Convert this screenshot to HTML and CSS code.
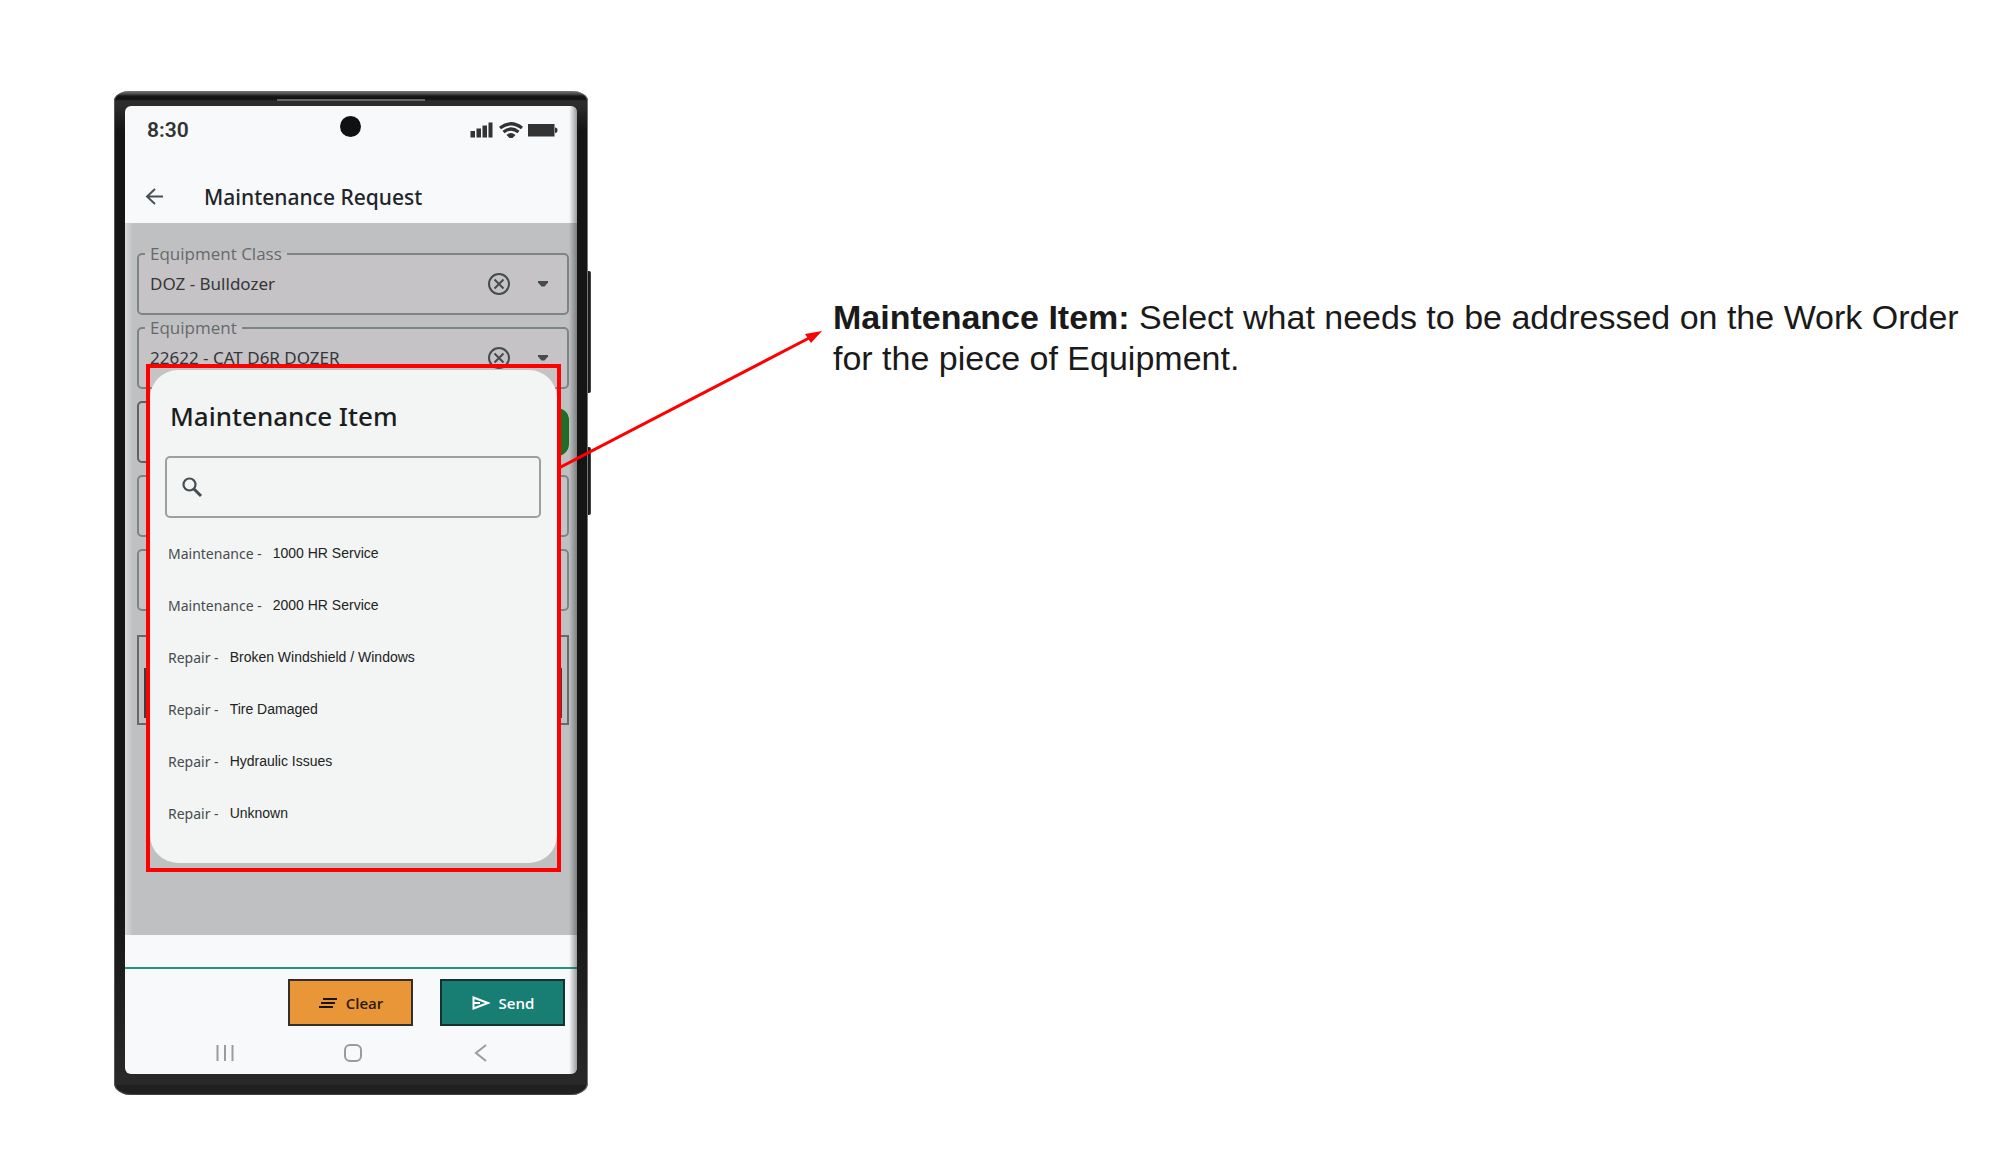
FILE: index.html
```html
<!DOCTYPE html>
<html lang="en">
<head>
    <meta charset="UTF-8">
    <meta name="viewport" content="width=device-width, initial-scale=1.0">
    <title>Maintenance Request</title>
    <link rel="stylesheet" href="styles.css">
</head>
<body>
    <div class="guide">
        <div class="phone">
            <span class="speaker"></span>
            <span class="side-button volume"></span>
            <span class="side-button power"></span>

            <div class="screen">
                <header class="top">
                    <div class="status-bar">
                        <span class="time">8:30</span>
                        <span class="camera"></span>
                        <svg class="status-icons" width="88" height="18" viewBox="0 0 88 18" fill="#333">
                            <path d="M0.500 10h4.500v6.500h-4.500zM6.500 7.500h4.500v9h-4.500zM12.500 4.500h4.500v12h-4.500zM18.500 1.500h4v15h-4z"/>
                            <g fill="none" stroke="#333" stroke-width="3.200">
                                <path d="M30 7Q41 -1.500 52 7"/>
                                <path d="M33.500 11Q41 5 48.500 11"/>
                            </g>
                            <path d="M36.500 14Q41 10 45.500 14L42.500 17h-3z"/>
                            <path d="M58 3h26.500v12.500h-26.500zM85 6.500q2.500 0 2.500 2.700t-2.500 2.700z"/>
                        </svg>
                    </div>
                    <div class="app-bar">
                        <button class="icon-button" aria-label="Back">
                            <svg width="20" height="18" viewBox="0 0 20 18" fill="none" stroke="#4a4f52" stroke-width="2"><path d="M18 8.500H2M10 1L2 8.500L10 16"/></svg>
                        </button>
                        <h1>Maintenance Request</h1>
                    </div>
                </header>

                <main class="form">
                    <fieldset class="field">
                        <legend><label for="equipmentClass">Equipment Class</label></legend>
                        <div class="field-row">
                            <select id="equipmentClass"><option>DOZ - Bulldozer</option></select>
                            <button class="icon-button" aria-label="Clear equipment class">
                                <svg width="24" height="24" viewBox="0 0 24 24" fill="none" stroke="#454c4d" stroke-width="2"><circle cx="12" cy="12" r="10"/><path d="M7.500 7.500l9 9M16.500 7.500l-9 9"/></svg>
                            </button>
                            <svg class="caret" width="10" height="6" viewBox="0 0 10 6" fill="#454c4d"><path d="M0 0h10v1.500L6.500 5.500h-3L0 1.500z"/></svg>
                        </div>
                    </fieldset>
                    <fieldset class="field">
                        <legend><label for="equipment">Equipment</label></legend>
                        <div class="field-row">
                            <select id="equipment"><option>22622 - CAT D6R DOZER</option></select>
                            <button class="icon-button" aria-label="Clear equipment">
                                <svg width="24" height="24" viewBox="0 0 24 24" fill="none" stroke="#454c4d" stroke-width="2"><circle cx="12" cy="12" r="10"/><path d="M7.500 7.500l9 9M16.500 7.500l-9 9"/></svg>
                            </button>
                            <svg class="caret" width="10" height="6" viewBox="0 0 10 6" fill="#454c4d"><path d="M0 0h10v1.500L6.500 5.500h-3L0 1.500z"/></svg>
                        </div>
                    </fieldset>
                    <div class="item-row">
                        <div class="blank active"></div>
                        <div class="add"></div>
                    </div>
                    <div class="blank"></div>
                    <div class="blank"></div>
                    <div class="notes"><div class="notes-inner"></div></div>

                    <div class="callout">
                        <section class="dialog" role="dialog" aria-labelledby="dialogTitle">
                            <h2 id="dialogTitle">Maintenance Item</h2>
                            <div class="search">
                                <svg width="22" height="22" viewBox="0 0 22 22" fill="none" stroke="#454d50"><circle cx="8.500" cy="8.500" r="6" stroke-width="2.200"/><path d="M13 13L20 20" stroke-width="3"/></svg>
                                <input type="search" aria-label="Search maintenance items">
                            </div>
                            <ul class="items">
                                <li><button>Maintenance - <span>1000 HR Service</span></button></li>
                                <li><button>Maintenance - <span>2000 HR Service</span></button></li>
                                <li><button>Repair - <span>Broken Windshield / Windows</span></button></li>
                                <li><button>Repair - <span>Tire Damaged</span></button></li>
                                <li><button>Repair - <span>Hydraulic Issues</span></button></li>
                                <li><button>Repair - <span>Unknown</span></button></li>
                            </ul>
                        </section>
                        <svg class="pointer" width="264" height="144" viewBox="0 0 264 144">
                            <path d="M0 138L254 6" stroke="#f00" stroke-width="3" fill="none"/>
                            <path d="M263 1L246 4L252 13z" fill="#f00"/>
                        </svg>
                    </div>
                </main>

                <footer class="bottom">
                    <div class="actions">
                        <button class="action clear">
                            <svg width="20" height="12" viewBox="0 0 20 12" stroke="#1d1408" stroke-width="2"><path d="M5 2h14M3 6h14M1 10h14"/></svg>
                            Clear
                        </button>
                        <button class="action send">
                            <svg width="20" height="16" viewBox="0 0 20 16" fill="none" stroke="#fff" stroke-width="2"><path d="M2.500 2.500L17 8L2.500 13.500zM2.500 8H9"/></svg>
                            Send
                        </button>
                    </div>
                    <nav class="nav-bar">
                        <button class="icon-button" aria-label="Recent apps">
                            <svg width="18" height="18" viewBox="0 0 18 18" stroke="#9b9b9b" stroke-width="2"><path d="M1.500 1v16M9 1v16M16.500 1v16"/></svg>
                        </button>
                        <button class="icon-button" aria-label="Home">
                            <svg width="18" height="18" viewBox="0 0 18 18" fill="none" stroke="#9b9b9b" stroke-width="2"><rect x="1" y="1" width="16" height="16" rx="5"/></svg>
                        </button>
                        <button class="icon-button" aria-label="Back">
                            <svg width="18" height="18" viewBox="0 0 18 18" fill="none" stroke="#9b9b9b" stroke-width="2"><path d="M14 1L4 9L14 17"/></svg>
                        </button>
                    </nav>
                </footer>
            </div>
        </div>

        <p class="note"><strong>Maintenance Item:</strong> Select what needs to be addressed on the Work Order for the piece of Equipment.</p>
    </div>
</body>
</html>
```

FILE: styles.css
```css
/* General Styles */
* {
    box-sizing: border-box;
}

body {
    margin: 0;
    background-color: #fff;
    color: #1a1a1a;
    font-family: "Noto Sans", "Open Sans", sans-serif;
}

button,
select,
input {
    font: inherit;
    color: inherit;
    margin: 0;
    padding: 0;
    border: none;
    background: none;
}

button {
    cursor: pointer;
}

svg {
    display: block;
    flex: none;
}

.guide {
    display: flex;
    align-items: flex-start;
    gap: 245px;
    padding: 91px 32px 56px 114px;
}

/* Phone frame */
.phone {
    position: relative;
    flex: 0 0 474px;
    padding: 15px 11px 21px;
    border-radius: 16px 16px 18px 18px / 10px 10px 12px 12px;
    background: linear-gradient(#777 0, #4a4a4a 3px, #181818 5px, #111 8px, #2c2c2c 10px, #2c2c2c 14px, #151515 40px, #151515 80%, #292929 99%, #202020 99%);
    box-shadow: inset 1px 0 #555, inset -1px 0 #777, inset 0 -1px #444;
}

.speaker {
    position: absolute;
    top: 8px;
    left: 163px;
    right: 163px;
    height: 2px;
    background: #666;
}

.side-button {
    position: absolute;
    left: 100%;
    width: 3px;
    background: #1c1c1c;
    border-right: 1px solid #444;
    border-radius: 0 2px 2px 0;
}

.volume {
    top: 180px;
    height: 122px;
}

.power {
    top: 356px;
    height: 68px;
}

.screen {
    position: relative;
    border-radius: 6px;
    background: #f8f9fb;
}

/* Curved glass edge */
.screen::after {
    content: "";
    position: absolute;
    top: 0;
    right: 0;
    bottom: 0;
    width: 8px;
    border-radius: 0 6px 6px 0;
    background: linear-gradient(to right, rgba(60, 65, 65, 0), rgba(60, 65, 65, 0.5));
    pointer-events: none;
}

/* Header */
.status-bar {
    position: relative;
    display: flex;
    justify-content: space-between;
    align-items: center;
    height: 48px;
    padding: 0 19px 0 22px;
}

.time {
    font-family: Roboto, sans-serif;
    font-size: 21px;
    font-weight: 600;
    color: #333;
}

.camera {
    position: absolute;
    top: 10px;
    left: 50%;
    width: 21px;
    height: 21px;
    margin-left: -11px;
    border-radius: 50%;
    background: #111;
}

.app-bar {
    display: flex;
    align-items: center;
    gap: 39px;
    padding: 28px 20px 11px;
}

.app-bar h1 {
    margin: 0;
    font-size: 21px;
    font-weight: 500;
    line-height: 30px;
    color: #222529;
}

/* Form */
.form {
    position: relative;
    padding: 20px 8px 210px 12px;
    background: linear-gradient(to right, #d8dad9, #bfc0c2 8px);
}

.field {
    min-width: 0;
    margin: 0 0 2px;
    padding: 0 19px 17px 11px;
    border: 2px solid #7d8485;
    border-radius: 5px;
    background: #c6c3c6;
}

.field legend {
    margin-left: -5px;
    padding: 0 5px;
    font-family: "Open Sans", sans-serif;
    font-size: 17px;
    line-height: 22px;
    color: #646a6b;
}

.field-row {
    display: flex;
    align-items: center;
    height: 24px;
    gap: 27px;
    margin-top: 7px;
}

.field select {
    flex: 1;
    min-width: 0;
    appearance: none;
    font-size: 17px;
    line-height: 24px;
    color: #343638;
}

.item-row {
    display: flex;
    align-items: center;
    margin: 12px 0;
}

.blank {
    height: 62px;
    margin-bottom: 12px;
    border: 2px solid #7d8485;
    border-radius: 5px;
    background: #c6c3c6;
}

.active {
    flex: 1;
    margin: 0 6px 0 0;
    border: 2px solid #5d6162;
}

.add {
    width: 60px;
    height: 48px;
    border-radius: 12px;
    background: #236b27;
}

.notes {
    margin-top: 24px;
    padding: 31px 5px 5px;
    border: 2px solid #65696a;
}

.notes-inner {
    height: 50px;
    border: 2px solid #3c3f40;
}

/* Highlighted dialog */
.callout {
    position: absolute;
    z-index: 2;
    top: 141px;
    left: 21px;
    right: 16px;
    padding: 2px 0 5px;
    border: 4px solid #f00;
}

.dialog {
    padding: 28px 16px 24px 15px;
    border-radius: 28px;
    background: #f2f5f4;
}

.dialog h2 {
    margin: 0 0 22px 5px;
    font-size: 26px;
    font-weight: 500;
    line-height: 36px;
    color: #1b1e20;
}

.search {
    display: flex;
    align-items: center;
    gap: 12px;
    height: 62px;
    padding: 0 16px 0 14px;
    border: 2px solid #9a9fa2;
    border-radius: 5px;
}

.search input {
    flex: 1;
    min-width: 0;
    height: 40px;
    font-size: 17px;
    outline: none;
}

.items {
    list-style: none;
    margin: 9px 0 0;
    padding: 0 3px;
}

.items button {
    display: flex;
    align-items: center;
    gap: 11px;
    width: 100%;
    height: 52px;
    font-size: 14px;
    color: #484b4d;
    text-align: left;
}

.items span {
    font-family: "Liberation Sans", Arial, sans-serif;
    color: #222;
}

.pointer {
    position: absolute;
    top: -38px;
    left: 100%;
    margin-left: 2px;
}

/* Footer */
.bottom {
    padding-top: 32px;
}

.actions {
    display: flex;
    justify-content: flex-end;
    gap: 27px;
    padding: 10px 12px 0;
    border-top: 2px solid #25917f;
}

.action {
    display: flex;
    justify-content: center;
    align-items: center;
    gap: 8px;
    width: 125px;
    height: 47px;
    border: 2px solid #33302c;
    font-family: "Open Sans", sans-serif;
    font-size: 15px;
    font-weight: 600;
}

.clear {
    background: #e89638;
    color: #2b1c0a;
}

.send {
    background: #187e73;
    border-color: #12332f;
    color: #fff;
}

.nav-bar {
    display: flex;
    justify-content: center;
    gap: 110px;
    padding: 18px 0 12px 3px;
}

/* Annotation */
.note {
    flex: 1;
    margin: 0;
    padding-top: 206px;
    font-family: "Liberation Sans", Arial, sans-serif;
    font-size: 34px;
    line-height: 41px;
}
```
